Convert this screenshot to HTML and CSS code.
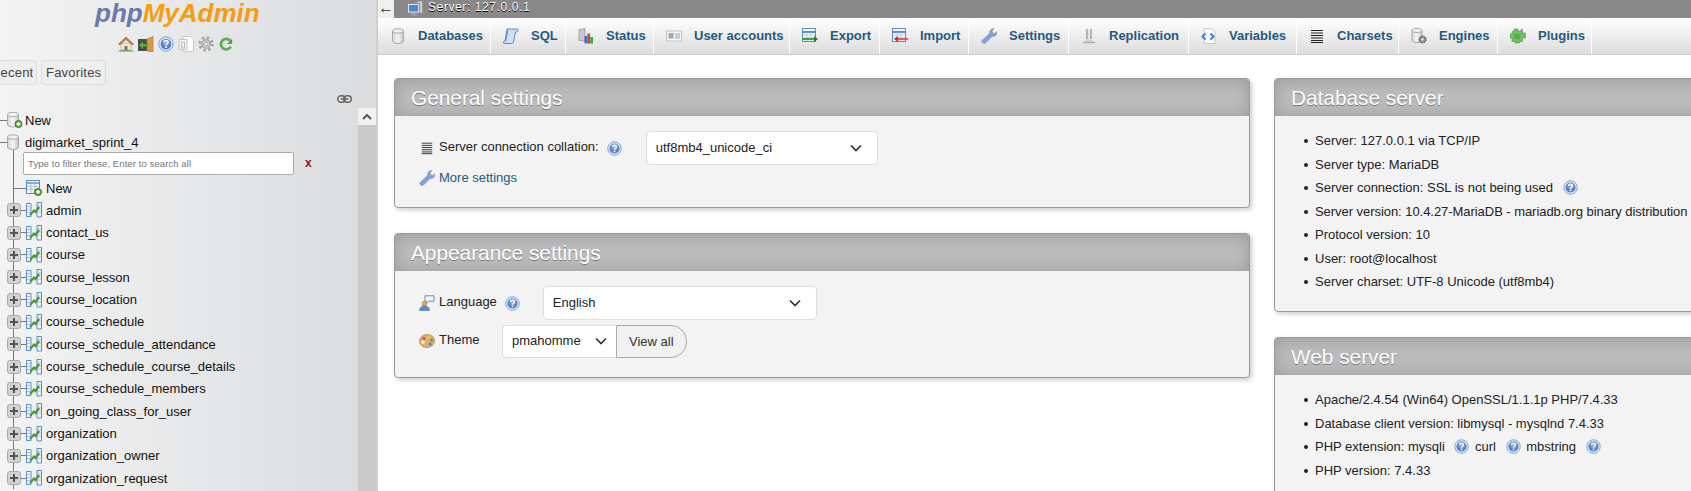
FILE: index.html
```html
<!DOCTYPE html>
<html lang="en">
<head>
<meta charset="utf-8">
<title>phpMyAdmin</title>
<link rel="stylesheet" href="styles.css">
</head>
<body>
<svg class="sprite" xmlns="http://www.w3.org/2000/svg">
  <defs>
    <linearGradient id="gDb" x1="0" x2="1" y1="0" y2="0"><stop offset="0" stop-color="#d4d4d4"/><stop offset=".5" stop-color="#f6f6f6"/><stop offset="1" stop-color="#c4c4c4"/></linearGradient>
    <radialGradient id="gHelp" cx=".5" cy=".4" r=".6"><stop offset="0" stop-color="#8fb4e6"/><stop offset="1" stop-color="#3f6fb5"/></radialGradient>
    <symbol id="i-db" viewBox="0 0 16 16"><path d="M2.500 3v10c0 1.400 2.400 2.500 5.500 2.500s5.500-1.100 5.500-2.500V3z" fill="url(#gDb)" stroke="#a8a8a8"/><ellipse cx="8" cy="3" rx="5.500" ry="2.200" fill="#f2f2f2" stroke="#a8a8a8"/></symbol>
    <symbol id="i-dbt" viewBox="0 0 16 16"><path d="M.5 3v10c0 1.400 2.400 2.500 5.500 2.500s5.500-1.100 5.500-2.500V3z" fill="url(#gDb)" stroke="#a8a8a8"/><ellipse cx="6" cy="3" rx="5.500" ry="2.200" fill="#f2f2f2" stroke="#a8a8a8"/></symbol>
    <symbol id="i-dbnew" viewBox="0 0 16 16"><path d="M.5 2.500v10c0 1.400 2.400 2.500 5.500 2.500s5.500-1.100 5.500-2.500v-10z" fill="url(#gDb)" stroke="#a8a8a8"/><ellipse cx="6" cy="2.500" rx="5.500" ry="2.200" fill="#f2f2f2" stroke="#a8a8a8"/><circle cx="11.500" cy="12" r="3.500" fill="#5cab3e" stroke="#3c7f28"/><path d="M9.500 12h4M11.500 10v4" stroke="#fff" stroke-width="1.400"/></symbol>
    <symbol id="i-help" viewBox="0 0 16 16"><circle cx="8" cy="8" r="7.200" fill="#dbe6f6" stroke="#7d9fd4"/><circle cx="8" cy="8" r="5.300" fill="url(#gHelp)"/><path d="M6 6.400c0-1.300 1-1.900 2-1.900s2.100.6 2.100 1.800c0 1.400-2.100 1.500-2.100 3" fill="none" stroke="#fff" stroke-width="1.500"/><rect x="7.200" y="10.300" width="1.700" height="1.700" fill="#fff"/></symbol>
    <symbol id="i-home" viewBox="0 0 16 16"><path d="M0 15.500c1-2.500 15-2.500 16 0z" fill="#5aa53a"/><path d="M3 7.500h10V14H3z" fill="#efe8d8" stroke="#b8a888" stroke-width=".6"/><path d="M6.500 10h3v4.500h-3z" fill="#777"/><path d="M.5 8 8 1l7.500 7-1.500.8L8 3.500 2 8.800z" fill="#c98a3c" stroke="#8d5a1e" stroke-width=".6"/></symbol>
    <symbol id="i-exit" viewBox="0 0 16 16"><path d="M0 3h9v12H0z" fill="#4a4d4a"/><path d="M9 3 15 .5V16l-6-1z" fill="#d69a4c" stroke="#a86f28" stroke-width=".6"/><path d="M1 9l4-3.500V8h4v2.500H5V13z" fill="#62b347" stroke="#2f7a1e" stroke-width=".5"/></symbol>
    <symbol id="i-docs" viewBox="0 0 16 16"><path d="M5 .5h7.500l3 3V15.500H5z" fill="#fff" stroke="#c8c8c8"/><path d="M1 3.500h8v10H1z" fill="#f2f2f2" stroke="#c4c4c4"/><path d="M3.500 6h3v6h-3z" fill="none" stroke="#bbb"/></symbol>
    <symbol id="i-gear" viewBox="0 0 16 16"><circle cx="8" cy="8" r="6.200" fill="none" stroke="#a6a6a6" stroke-width="3" stroke-dasharray="2.400 2.470"/><circle cx="8" cy="8" r="4.300" fill="#cfcfcf" stroke="#979797"/><circle cx="8" cy="8" r="2" fill="#eee" stroke="#979797" stroke-width=".7"/></symbol>
    <symbol id="i-reload" viewBox="0 0 16 16"><path d="M13 4.500A6 6 0 1 0 13.500 11" fill="none" stroke="#5fae55" stroke-width="3.200"/><path d="M9 8h6V2z" fill="#4f9f45"/><circle cx="8" cy="8" r="1.800" fill="#cfe8c5"/></symbol>
    <symbol id="i-sql" viewBox="0 0 16 16"><path d="M4 1h10c1 0 1.500 1 1 2l-1 1h-1.500l-2 10c-.2 1-1 1.500-2 1.500H1c-1 0-1-1.200-.5-2l1.500-.5z" fill="#cfe0f5" stroke="#5a8bd0"/><path d="M4 1c1 .5 1 2 .6 3L2.500 13.500" fill="none" stroke="#5a8bd0"/></symbol>
    <symbol id="i-status" viewBox="0 0 16 16"><path d="M1 1.500 7 .5v12.500l-6-.5z" fill="#c9c9c9" stroke="#8e8e8e" stroke-width=".7"/><rect x="6.500" y="8" width="2.800" height="7.500" fill="#3b6fd0"/><rect x="9.300" y="5.500" width="2.800" height="10" fill="#d04a3a"/><rect x="12.200" y="9" width="2.800" height="6.500" fill="#4aa63f"/></symbol>
    <symbol id="i-users" viewBox="0 0 16 16"><rect x=".5" y="3" width="15" height="10" fill="#f7f7f7" stroke="#c4c4c4"/><rect x="2.500" y="5" width="5" height="5.500" fill="#7fa7dc"/><circle cx="5" cy="7" r="1.500" fill="#e8a24a"/><path d="M9 6h5M9 8h5M9 10h5" stroke="#9aa8bb"/></symbol>
    <symbol id="i-export" viewBox="0 0 16 16"><rect x=".5" y=".5" width="13" height="13" fill="#f4f7fb" stroke="#5a8bd0"/><path d="M1 4h12" stroke="#5a8bd0" stroke-width="2"/><path d="M1 7h12M1 10h12M5 4v9M9 4v9" stroke="#a8c2e6" stroke-width=".7"/><path d="M0 11h12" stroke="#4b9e38" stroke-width="2.200"/><path d="M12 8l4 3-4 3z" fill="#2f7a1e"/></symbol>
    <symbol id="i-import" viewBox="0 0 16 16"><rect x=".5" y=".5" width="13" height="13" fill="#f4f7fb" stroke="#5a8bd0"/><path d="M1 4h12" stroke="#5a8bd0" stroke-width="2"/><path d="M1 7h12M1 10h12M5 4v9M9 4v9" stroke="#a8c2e6" stroke-width=".7"/><path d="M5 11h11" stroke="#e25a5a" stroke-width="2.200"/><path d="M6 8l-4 3 4 3z" fill="#c62a2a"/></symbol>
    <symbol id="i-wrench" viewBox="0 0 16 16"><path d="M1 12.500 8.500 5.500C8.200 3 10 .5 13 .6l-2 2.400.7 2 2.200.5L15.800 3.500c.6 3-1.800 5.500-4.600 4.800L4.500 15c-1.700 1.500-4.600-.7-3.500-2.500z" fill="#7ca3e0" stroke="#8a8f9a" stroke-width=".6"/></symbol>
    <symbol id="i-repl" viewBox="0 0 16 16"><path d="M6 1v10M10 1v10" stroke="#a6a6a6" stroke-width="1.600"/><path d="M8 2v9" stroke="#d9d9d9" stroke-width="1"/><path d="M4.500 11.500h7l1 2h-9z" fill="#d0d0d0"/><path d="M2 14.500h12" stroke="#a6a6a6" stroke-width="1.300"/></symbol>
    <symbol id="i-vars" viewBox="0 0 16 16"><path d="M3 .5h7.500l3.500 3.500v11.500H3z" fill="#fafafa" stroke="#c6c6c6"/><path d="M4.500 5.500 1.500 8.500l3 3M9.500 5.500l3 3-3 3" fill="none" stroke="#3f80d8" stroke-width="2"/></symbol>
    <symbol id="i-lines" viewBox="0 0 16 16"><path d="M2 2.500h12M2 5h12M2 7.500h12M2 10h12M2 12.500h12M2 14.500h12" stroke="#222" stroke-width="1"/></symbol>
    <symbol id="i-engines" viewBox="0 0 16 16"><path d="M1 2.500v10c0 1.300 2.200 2 5 2s5-.7 5-2v-10z" fill="url(#gDb)" stroke="#a8a8a8"/><ellipse cx="6" cy="2.500" rx="5" ry="2" fill="#f2f2f2" stroke="#a8a8a8"/><circle cx="11.500" cy="11.500" r="3.600" fill="#8b8b8b" stroke="#5c5c5c" stroke-dasharray="1.500 1"/><circle cx="11.500" cy="11.500" r="1.300" fill="#e8e8e8"/></symbol>
    <symbol id="i-plugin" viewBox="0 0 16 16"><path d="M4 1h4v2h3V1.500h1.500V5h3v5h-3v3.500h-3V15H5v-1.500H2V10H0V6h2V3.500h2z" fill="#6fbf63" stroke="#4c9c44" stroke-width=".6"/><path d="M4 6h6v5H4z" fill="#4c9c44" opacity=".6"/></symbol>
    <symbol id="i-tnew" viewBox="0 0 16 16"><rect x=".5" y=".5" width="13" height="13" fill="#f1f5fb" stroke="#5a8bd0"/><path d="M1 3h12" stroke="#88aadd" stroke-width="2"/><path d="M1 6.500h12M1 9.500h12M5 4v9M9 4v9" stroke="#a5b8d4" stroke-width=".8"/><circle cx="12" cy="12" r="3.500" fill="#5cab3e" stroke="#3c7f28"/><path d="M10 12h4M12 10v4" stroke="#fff" stroke-width="1.400"/></symbol>
    <symbol id="i-view" viewBox="0 0 16 16"><path d="M.5 1.500h4.500v13H.5zM11 .5h4.500v14.500H11z" fill="#f1f5fb" stroke="#5a8bd0"/><path d="M1 4.500h4M1 7.500h4M1 10.500h4M11 4h4M11 7h4M11 10h4" stroke="#a5c0e6"/><path d="M12 1v3M13 5v2" stroke="#9fd08c"/><path d="M4 13 8 8.500l1.500 1.500L13 5" fill="none" stroke="#4c9a2f" stroke-width="2.200"/></symbol>
    <symbol id="i-link" viewBox="0 0 16 10"><rect x=".8" y="1.500" width="8" height="7" rx="3.500" fill="none" stroke="#666" stroke-width="1.600"/><rect x="7.200" y="1.500" width="8" height="7" rx="3.500" fill="none" stroke="#666" stroke-width="1.600"/><path d="M4 5h8" stroke="#666" stroke-width="1.600"/></symbol>
    <symbol id="i-server" viewBox="0 0 16 16"><path d="M10 .5l5.500-.5v12l-5.500.5z" fill="#cfcfcf" stroke="#8e8e8e" stroke-width=".6"/><rect x=".5" y="2.500" width="12" height="9.500" fill="#dfe7f2" stroke="#7f8fa3"/><rect x="2" y="4" width="9" height="6.500" fill="#4f86cf"/><path d="M4 14.500h6l-1-2.500H5z" fill="#9aa4b0"/></symbol>
    <symbol id="i-lang" viewBox="0 0 16 16"><path d="M6 .8h9v5.400H9.500L7 8.500V6.200H6z" fill="#f4f6fa" stroke="#5a8bd0"/><circle cx="5.500" cy="8.500" r="2.500" fill="#e8a65a" stroke="#a56b2a" stroke-width=".5"/><path d="M.5 15.500c0-3 2-4.500 5-4.500s5 1.500 5 4.500z" fill="#5a8bd0" stroke="#3a68aa" stroke-width=".5"/></symbol>
    <symbol id="i-theme" viewBox="0 0 16 16"><path d="M8 1.500c4.500 0 7.500 2.800 7.500 6.300 0 4.200-4 6.700-7.500 6.700C3.500 14.500.5 11.500.5 8.500.5 4.500 4 1.500 8 1.500z" fill="#e0ad74" stroke="#b4793c" stroke-width=".7"/><circle cx="5" cy="5.500" r="1.500" fill="#d8473c"/><circle cx="9" cy="4.500" r="1.500" fill="#e8c83c"/><circle cx="12.500" cy="7" r="1.500" fill="#4aa63f"/><circle cx="11" cy="11" r="1.500" fill="#4f80d0"/><circle cx="4" cy="9" r="1.700" fill="#fff"/></symbol>
  </defs>
</svg>
<div class="app">
  <aside class="nav">
    <div class="logo"><span class="logo-php">php</span><span class="logo-my">MyAdmin</span></div>
    <div class="quick">
      <svg class="q"><use href="#i-home"/></svg>
      <svg class="q"><use href="#i-exit"/></svg>
      <svg class="q"><use href="#i-help"/></svg>
      <svg class="q"><use href="#i-docs"/></svg>
      <svg class="q"><use href="#i-gear"/></svg>
      <svg class="q q-r"><use href="#i-reload"/></svg>
    </div>
    <div class="recent">
      <span class="rtab rtab-cut">Recent</span>
      <span class="rtab">Favorites</span>
    </div>
    <div class="linkrow"><svg class="link"><use href="#i-link"/></svg></div>
    <div class="treewrap">
      <div class="tree">
        <div class="row top"><i class="h h7"></i><svg class="ic14"><use href="#i-dbnew"/></svg><span>New</span></div>
        <div class="row top"><i class="h h7"></i><svg class="ic14"><use href="#i-dbt"/></svg><span>digimarket_sprint_4</span></div>
        <div class="children">
          <div class="filter"><input class="finput" type="text" placeholder="Type to filter these, Enter to search all"><b class="fx">x</b></div>
          <div class="row newt"><i class="h h13"></i><svg class="ic16"><use href="#i-tnew"/></svg><span>New</span></div>
          <div class="row t"><b class="plus"></b><i class="h h4"></i><svg class="ic16"><use href="#i-view"/></svg><span>admin</span></div>
          <div class="row t"><b class="plus"></b><i class="h h4"></i><svg class="ic16"><use href="#i-view"/></svg><span>contact_us</span></div>
          <div class="row t"><b class="plus"></b><i class="h h4"></i><svg class="ic16"><use href="#i-view"/></svg><span>course</span></div>
          <div class="row t"><b class="plus"></b><i class="h h4"></i><svg class="ic16"><use href="#i-view"/></svg><span>course_lesson</span></div>
          <div class="row t"><b class="plus"></b><i class="h h4"></i><svg class="ic16"><use href="#i-view"/></svg><span>course_location</span></div>
          <div class="row t"><b class="plus"></b><i class="h h4"></i><svg class="ic16"><use href="#i-view"/></svg><span>course_schedule</span></div>
          <div class="row t"><b class="plus"></b><i class="h h4"></i><svg class="ic16"><use href="#i-view"/></svg><span>course_schedule_attendance</span></div>
          <div class="row t"><b class="plus"></b><i class="h h4"></i><svg class="ic16"><use href="#i-view"/></svg><span>course_schedule_course_details</span></div>
          <div class="row t"><b class="plus"></b><i class="h h4"></i><svg class="ic16"><use href="#i-view"/></svg><span>course_schedule_members</span></div>
          <div class="row t"><b class="plus"></b><i class="h h4"></i><svg class="ic16"><use href="#i-view"/></svg><span>on_going_class_for_user</span></div>
          <div class="row t"><b class="plus"></b><i class="h h4"></i><svg class="ic16"><use href="#i-view"/></svg><span>organization</span></div>
          <div class="row t"><b class="plus"></b><i class="h h4"></i><svg class="ic16"><use href="#i-view"/></svg><span>organization_owner</span></div>
          <div class="row t"><b class="plus"></b><i class="h h4"></i><svg class="ic16"><use href="#i-view"/></svg><span>organization_request</span></div>
        </div>
      </div>
      <div class="scroll"><div class="scroll-up"><svg class="chev-up" viewBox="0 0 10 6"><path d="M1 5l4-4 4 4" fill="none" stroke="#555" stroke-width="2"/></svg></div></div>
    </div>
  </aside>
  <main class="main">
    <div class="serverbar"><span class="back">←</span><svg class="srv"><use href="#i-server"/></svg><span class="srvtext">Server: 127.0.0.1</span></div>
    <nav class="tabs">
      <a class="tab tab-db"><svg class="tic"><use href="#i-db"/></svg>Databases</a>
      <a class="tab tab-sql"><svg class="tic"><use href="#i-sql"/></svg>SQL</a>
      <a class="tab tab-status"><svg class="tic"><use href="#i-status"/></svg>Status</a>
      <a class="tab tab-users"><svg class="tic"><use href="#i-users"/></svg>User accounts</a>
      <a class="tab tab-export"><svg class="tic"><use href="#i-export"/></svg>Export</a>
      <a class="tab tab-import"><svg class="tic"><use href="#i-import"/></svg>Import</a>
      <a class="tab tab-settings"><svg class="tic"><use href="#i-wrench"/></svg>Settings</a>
      <a class="tab tab-repl"><svg class="tic"><use href="#i-repl"/></svg>Replication</a>
      <a class="tab tab-vars"><svg class="tic"><use href="#i-vars"/></svg>Variables</a>
      <a class="tab tab-chars"><svg class="tic"><use href="#i-lines"/></svg>Charsets</a>
      <a class="tab tab-eng"><svg class="tic"><use href="#i-engines"/></svg>Engines</a>
      <a class="tab tab-plug"><svg class="tic"><use href="#i-plugin"/></svg>Plugins</a>
    </nav>
    <div class="content">
      <div class="col-left">
        <section class="group g-general">
          <h2>General settings</h2>
          <div class="body">
            <div class="frow f-coll">
              <svg class="fic lines"><use href="#i-lines"/></svg>
              <span class="lbl">Server connection collation:</span>
              <svg class="help"><use href="#i-help"/></svg>
              <div class="sel sel-coll"><span>utf8mb4_unicode_ci</span><svg class="chev" viewBox="0 0 12 8"><path d="M1 1.500l5 5 5-5" fill="none" stroke="#333" stroke-width="1.700"/></svg></div>
            </div>
            <div class="frow f-more">
              <svg class="fic"><use href="#i-wrench"/></svg>
              <a class="lnk">More settings</a>
            </div>
          </div>
        </section>
        <section class="group g-appear">
          <h2>Appearance settings</h2>
          <div class="body">
            <div class="frow f-lang">
              <svg class="fic"><use href="#i-lang"/></svg>
              <span class="lbl">Language</span>
              <svg class="help"><use href="#i-help"/></svg>
              <div class="sel sel-lang"><span>English</span><svg class="chev" viewBox="0 0 12 8"><path d="M1 1.500l5 5 5-5" fill="none" stroke="#333" stroke-width="1.700"/></svg></div>
            </div>
            <div class="frow f-theme">
              <svg class="fic"><use href="#i-theme"/></svg>
              <span class="lbl lbl-theme">Theme</span>
              <div class="themegrp">
                <div class="sel sel-theme"><span>pmahomme</span><svg class="chev" viewBox="0 0 12 8"><path d="M1 1.500l5 5 5-5" fill="none" stroke="#333" stroke-width="1.700"/></svg></div>
                <span class="viewall">View all</span>
              </div>
            </div>
          </div>
        </section>
      </div>
      <div class="col-right">
        <section class="group g-db">
          <h2>Database server</h2>
          <ul class="info">
            <li>Server: 127.0.0.1 via TCP/IP</li>
            <li>Server type: MariaDB</li>
            <li>Server connection: SSL is not being used <svg class="help help-in"><use href="#i-help"/></svg></li>
            <li class="tight">Server version: 10.4.27-MariaDB - mariadb.org binary distribution</li>
            <li>Protocol version: 10</li>
            <li>User: root@localhost</li>
            <li>Server charset: UTF-8 Unicode (utf8mb4)</li>
          </ul>
        </section>
        <section class="group g-web">
          <h2>Web server</h2>
          <ul class="info">
            <li>Apache/2.4.54 (Win64) OpenSSL/1.1.1p PHP/7.4.33</li>
            <li>Database client version: libmysql - mysqlnd 7.4.33</li>
            <li>PHP extension: mysqli <svg class="help help-in"><use href="#i-help"/></svg> curl <svg class="help help-in"><use href="#i-help"/></svg> mbstring <svg class="help help-in"><use href="#i-help"/></svg></li>
            <li>PHP version: 7.4.33</li>
          </ul>
        </section>
      </div>
    </div>
  </main>
</div>
</body>
</html>
```
FILE: styles.css
```css
* { box-sizing: border-box; }
html, body { margin: 0; padding: 0; height: 100%; overflow: hidden; background: #fff; }
body { font-family: "Liberation Sans", Arial, sans-serif; font-size: 13px; color: #222; }
.sprite { display: block; width: 0; height: 0; overflow: hidden; }
.app { display: flex; height: 491px; overflow: hidden; }

/* Navigation */
.nav { width: 378px; flex: none; height: 491px; overflow: hidden; background: linear-gradient(to right, #f3f3f3, #dadcde 99.400%, #cfcfcf 99.500%); }
.logo { height: 26px; padding-left: 95px; font: italic bold 26px/26px "Liberation Sans", sans-serif; white-space: nowrap; }
.logo-php { color: #6c78af; }
.logo-my { color: #f89c0e; }
.quick { display: flex; justify-content: flex-start; gap: 4px; padding: 10px 0 0 118px; height: 33px; }
.q { width: 16px; height: 16px; }
.q-r { margin-left: 1px; width: 14px; }
.recent { display: flex; gap: 4px; margin: 1px 0 0 -14px; height: 25px; }
.rtab { display: block; height: 25px; padding: 0 4px; line-height: 23px; border: 1px solid #ddd; border-radius: 4px; background: #eee; color: #444; letter-spacing: .2px; }
.rtab-cut { width: 51px; }
.linkrow { display: flex; justify-content: flex-end; padding: 7px 26px 0 0; height: 23px; }
.link { width: 15px; height: 10px; margin-top: 2px; }
.treewrap { display: flex; height: 400px; }
.tree { flex: none; width: 358px; padding-top: 1px; }
.scroll { width: 18px; flex: none; background: #c9c9c9; }
.scroll-up { height: 17px; background: #f1f1f1; display: flex; align-items: center; justify-content: center; }
.chev-up { width: 10px; height: 6px; }
.row { display: flex; align-items: center; height: 22.330px; white-space: nowrap; color: #111; }
.h { display: block; height: 1px; background: #777; flex: none; }
.h7 { width: 7px; }
.h13 { width: 12px; }
.h4 { width: 5px; }
.ic14 { width: 16px; height: 16px; flex: none; margin-right: 2px; }
.ic16 { width: 16px; height: 16px; flex: none; margin-right: 4px; }
.children { margin: -4px 0 0 13px; padding-top: 4px; border-left: 1px solid #777; }
.filter { display: flex; align-items: flex-start; height: 23.200px; margin-left: 9px; }
.finput { width: 271px; height: 23px; margin-top: -1.500px; padding: 0 4px; border: 1px solid #aaa; border-radius: 2px; background: #fff; font: 9.600px "Liberation Sans", sans-serif; letter-spacing: .05px; }
.finput::placeholder { color: #777; opacity: 1; }
.fx { margin: 2px 0 0 11px; color: #8a1a1a; font-size: 12px; font-weight: bold; }
.t { margin-left: -7px; }
.plus { display: block; width: 14px; height: 14px; flex: none; border: 1px solid #aaa; border-radius: 3px; background-color: #d2d2d2; background-image: linear-gradient(#555, #555), linear-gradient(#555, #555); background-size: 8px 2px, 2px 8px; background-position: center; background-repeat: no-repeat; }

/* Main */
.main { flex: 1; min-width: 0; display: flex; flex-direction: column; overflow: hidden; }
.serverbar { display: flex; align-items: center; height: 18px; flex: none; background: #888; color: #fff; }
.back { display: block; width: 16px; height: 18px; background: #f0f0f0; color: #333; font-size: 16px; line-height: 16px; text-align: center; }
.srv { width: 16px; height: 16px; margin-left: 13px; }
.srvtext { margin-left: 5px; font-size: 12px; letter-spacing: .6px; text-shadow: 0 1px 0 #000; position: relative; top: -2px; }
.tabs { display: flex; height: 37px; flex: none; background: linear-gradient(#fff, #dcdcdc); border-bottom: 1px solid #ccc; }
.tab { display: flex; align-items: center; height: 36px; flex: none; padding: 0 0 1px 12px; border-right: 1px solid #fff; font-weight: bold; font-size: 13px; color: #235a81; }
.tic { width: 16px; height: 16px; flex: none; margin-right: 12px; }
.tab-db { width: 113px; }
.tab-sql { width: 75px; }
.tab-status { width: 88px; }
.tab-users { width: 136px; }
.tab-export { width: 90px; }
.tab-import { width: 89px; }
.tab-settings { width: 100px; }
.tab-repl { width: 120px; }
.tab-vars { width: 108px; }
.tab-chars { width: 102px; }
.tab-eng { width: 99px; }
.tab-plug { width: 94px; }

.content { display: flex; gap: 24px; padding: 23px 0 0 16px; }
.col-left { width: 856px; flex: none; display: flex; flex-direction: column; gap: 25px; }
.col-right { width: 480px; flex: none; display: flex; flex-direction: column; gap: 25px; }
.group { border: 1px solid #999; border-radius: 4px; background: #f3f3f3; box-shadow: 2px 2px 5px #ccc; }
.group h2 { margin: 0; height: 37px; padding: 0 0 0 16px; background: #bbb; color: #fff; font-size: 20.800px; line-height: 37px; font-weight: normal; text-shadow: 0 1px 0 #777; box-shadow: inset 0 1px 15px #999; border-radius: 3px 3px 0 0; }
.g-general { height: 130px; }
.g-appear { height: 145px; }
.g-db { height: 234px; }
.g-web { height: 200px; }
.body { padding: 15px 0 0 24px; }
.frow { display: flex; align-items: center; }
.fic { width: 16px; height: 16px; flex: none; margin-right: 4px; }
.lines { width: 14px; margin-left: 1px; margin-right: 5px; }
.lbl { margin-bottom: 3px; }
.lnk { margin-bottom: 2px; color: #235a81; }
.sel > span { margin-bottom: 2px; }
.help { width: 15px; height: 15px; flex: none; margin-left: 8px; }
.sel { display: flex; align-items: center; justify-content: space-between; height: 34px; padding: 0 15px 0 9px; background: #fff; border: 1px solid #ddd; border-radius: 4px; }
.chev { width: 12px; height: 8px; }
.f-coll { height: 34px; }
.sel-coll { width: 232px; margin-left: 24px; }
.f-more { height: 26px; }
.f-lang { height: 34px; }
.sel-lang { width: 274px; margin-left: 23px; }
.f-theme { height: 34px; margin-top: 4px; }
.lbl-theme { width: 63px; }
.themegrp { display: flex; }
.sel-theme { width: 114px; height: 33px; padding-right: 9px; border-right: 0; border-radius: 4px 0 0 4px; }
.viewall { display: block; width: 71px; height: 33px; line-height: 31px; padding-left: 12px; background: #f1f1f1; border: 1px solid #aaa; border-radius: 0 16px 16px 0; color: #333; }
.info { margin: 0; padding: 13px 0 0 40px; list-style: none; }
.info li { position: relative; height: 23.500px; line-height: 23.500px; white-space: nowrap; color: #222; }
.info .tight { letter-spacing: -.05px; }
.info li::before { content: ""; position: absolute; left: -11px; top: 10px; width: 4px; height: 4px; border-radius: 50%; background: #222; }
.help-in { vertical-align: -3px; margin: 0 2px 0 6px; }
```
